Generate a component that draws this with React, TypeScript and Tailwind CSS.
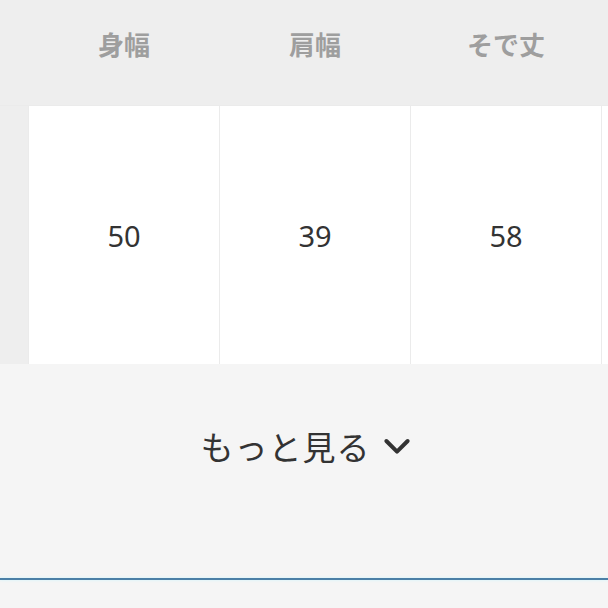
import React from "react";

const headers = ["身幅", "肩幅", "そで丈"];
const values = ["50", "39", "58"];

const App = () => {
  return (
    <div
      className="w-[608px] h-[608px] overflow-hidden bg-[#f5f5f5] flex flex-col"
      style={{ fontFamily: '"Noto Sans", "Noto Sans CJK JP", sans-serif' }}
    >
      <div className="grid grid-cols-[28px_190px_190px_190px_190px] grid-rows-[105px_258px] gap-px bg-[#ebebeb] w-max">
        <div className="bg-[#eeeeee]" />
        {headers.map((h) => (
          <div
            key={h}
            className="bg-[#eeeeee] flex items-center justify-center text-[26px] font-bold text-[#9e9e9e] pb-[14px] -mx-px px-px"
          >
            {h}
          </div>
        ))}
        <div className="bg-[#eeeeee]" />
        <div className="bg-[#eeeeee]" />
        {values.map((v) => (
          <div
            key={v}
            className="bg-white flex items-center justify-center text-[29px] text-[#333333] pt-[2px]"
          >
            {v}
          </div>
        ))}
        <div className="bg-white" />
      </div>
      <div className="flex items-center justify-center gap-[11px] h-[164px] pt-[4px] pl-[4px] text-[#333333]">
        <span className="text-[33px] tracking-[1px]">もっと見る</span>
        <svg width="30" height="30" viewBox="0 0 24 24" fill="none" stroke="#333333" strokeWidth="3.2" strokeLinecap="round" strokeLinejoin="round" className="-mt-1">
          <path d="M3.5 8l8.5 8.5 8.5-8.5" />
        </svg>
      </div>
      <div className="mt-[50px] h-[2px] bg-[#4b7fa6] shadow-[0_0_3px_#c8f4ff]" />
    </div>
  );
};

export default App;
